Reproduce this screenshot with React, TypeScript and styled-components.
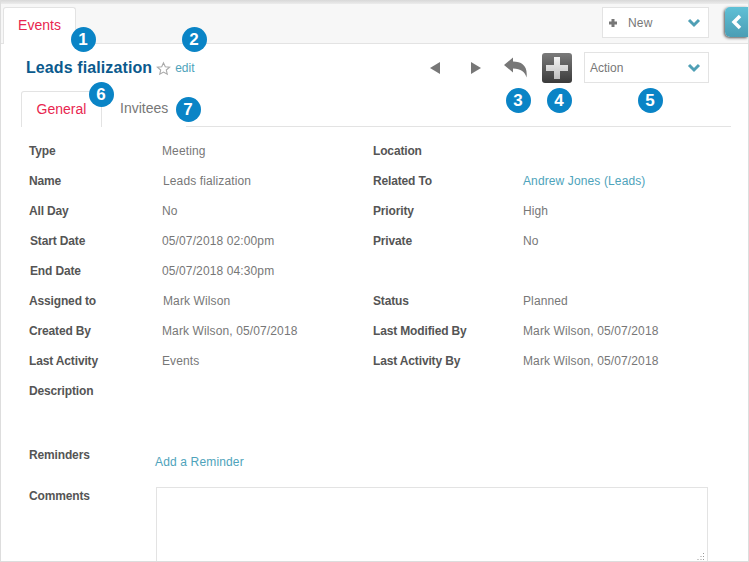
import React from "react";
import styled, { createGlobalStyle } from "styled-components";

const GlobalStyle = createGlobalStyle`
  html, body {
    margin: 0;
    padding: 0;
    background: #fff;
    overflow: hidden;
  }
  * {
    box-sizing: border-box;
  }
`;

const Page = styled.div`
  position: relative;
  width: 749px;
  height: 562px;
  overflow: hidden;
  font-family: "Liberation Sans", Arial, sans-serif;
  font-size: 12px;
  color: #666;
  background: #fff;
  border-left: 1px solid #ddd;
  border-right: 1px solid #ddd;
  border-bottom: 1px solid #ddd;
`;

const Shade = styled.div`
  height: 4px;
  background: linear-gradient(#d8d8d8, #ececec);
`;

const TopBar = styled.div`
  height: 40px;
  background: #f7f7f7;
  border-bottom: 1px solid #e3e3e3;
  display: flex;
  padding: 3px 0 0 2px;
`;

const ModuleTab = styled.div`
  width: 73px;
  height: 37px;
  background: #fff;
  border: 1px solid #e3e3e3;
  border-bottom: 0;
  border-radius: 3px 3px 0 0;
  color: #e8264f;
  font-size: 14px;
  text-align: center;
  line-height: 35px;
`;

const NewButton = styled.div`
  margin-left: auto;
  margin-right: 16px;
  width: 107px;
  height: 31px;
  background: #fff;
  border: 1px solid #e3e3e3;
  display: flex;
  align-items: center;
  padding: 0 7px 0 5px;
  font-size: 12px;
  letter-spacing: 0.15px;
  color: #777;
`;

const NewLabel = styled.span`
  margin-left: 10px;
  flex: 1;
`;

const CollapseTab = styled.div`
  width: 23px;
  height: 30px;
  background: linear-gradient(#5fc0d6, #4a9db4);
  border-radius: 5px 0 0 5px;
  box-shadow: -1px 1px 3px #555;
  display: flex;
  align-items: center;
  justify-content: center;
`;

const Body = styled.div`
  padding: 0 17px 0 20px;
`;

const HeaderRow = styled.div`
  height: 47px;
  display: flex;
  align-items: flex-start;
`;

const TitleGroup = styled.div`
  display: flex;
  align-items: center;
  height: 20px;
  margin: 14px 0 0 5px;
`;

const Title = styled.h1`
  margin: 0;
  font-size: 16px;
  font-weight: bold;
  letter-spacing: 0.1px;
  color: #0b5a8d;
`;

const Star = styled.svg`
  margin-left: 4px;
`;

const EditLink = styled.a`
  color: #4ea3bb;
  font-size: 12px;
  margin-left: 4px;
`;

const Actions = styled.div`
  margin-left: auto;
  margin-top: 8px;
  margin-right: 22px;
  display: flex;
  align-items: center;
  height: 31px;
`;

const NavIcon = styled.svg<{ $gap: number }>`
  margin-right: ${(p) => p.$gap}px;
  display: block;
`;

const ActionSelect = styled.div`
  width: 125px;
  height: 31px;
  margin-left: 12px;
  border: 1px solid #e3e3e3;
  display: flex;
  align-items: center;
  justify-content: space-between;
  padding: 0 7px 0 5px;
  font-size: 12px;
  color: #777;
`;

const TabStrip = styled.div`
  height: 36px;
  display: flex;
  border-bottom: 1px solid #e3e3e3;
`;

const InnerTab = styled.div<{ $active?: boolean }>`
  height: 36px;
  padding: 0 ${(p) => (p.$active ? "14px" : "18px")};
  width: ${(p) => (p.$active ? "81px" : "auto")};
  font-size: 14px;
  line-height: 35px;
  text-align: center;
  color: ${(p) => (p.$active ? "#e8264f" : "#777")};
  background: #fff;
  border: ${(p) => (p.$active ? "1px solid #e3e3e3" : "0")};
  border-bottom: 0;
  border-radius: 3px 3px 0 0;
`;

const Details = styled.div`
  padding: 9px 0 0 8px;
  display: grid;
  grid-template-columns: 133px 211px 150px 1fr;
  grid-auto-rows: 30px;
  align-items: center;
`;

const Label = styled.div<{ $nudge?: number }>`
  font-weight: bold;
  letter-spacing: -0.15px;
  color: #555;
  margin-left: ${(p) => p.$nudge ?? 0}px;
`;

const Value = styled.div<{ $nudge?: number }>`
  color: #777;
  letter-spacing: 0.12px;
  margin-left: ${(p) => p.$nudge ?? 0}px;
`;

const ValueLink = styled(Value)`
  color: #4ea3bb;
`;

const Reminders = styled.div`
  margin: 42px 0 0 8px;
  display: flex;
  height: 33px;
`;

const ReminderLink = styled.a`
  margin: 7px 0 0 81px;
  color: #4ea3bb;
  letter-spacing: 0.15px;
`;

const StackedLabel = styled(Label)`
  width: 45px;
  line-height: 14px;
`;

const Comments = styled.div`
  margin: 6px 0 0 8px;
  display: flex;
`;

const CommentsLabel = styled(Label)`
  width: 127px;
  padding-top: 2px;
`;

const CommentBox = styled.div`
  position: relative;
  width: 552px;
  height: 100px;
  border: 1px solid #e3e3e3;
`;

const Grip = styled.svg`
  position: absolute;
  right: 2px;
  top: 65px;
`;

const Badge = styled.div<{ $x: number; $y: number }>`
  position: absolute;
  left: ${(p) => p.$x - 13.5}px;
  top: ${(p) => p.$y - 12.5}px;
  width: 25px;
  height: 25px;
  border-radius: 50%;
  background: #0a84c6;
  color: #fff;
  font-size: 17px;
  font-weight: bold;
  line-height: 25px;
  text-align: center;
`;

const Chevron = () => (
  <svg width="14" height="10" viewBox="0 0 14 10">
    <path d="M2 2 L7 7 L12 2" fill="none" stroke="#4f9fb5" strokeWidth="3" />
  </svg>
);

const rows: [React.ReactNode, React.ReactNode, string, React.ReactNode][] = [
  [<Label>Type</Label>, <Value>Meeting</Value>, "Location", <Value />],
  [<Label>Name</Label>, <Value $nudge={1}>Leads fialization</Value>, "Related To", <ValueLink>Andrew Jones (Leads)</ValueLink>],
  [<Label>All Day</Label>, <Value>No</Value>, "Priority", <Value>High</Value>],
  [<Label $nudge={1}>Start Date</Label>, <Value>05/07/2018 02:00pm</Value>, "Private", <Value>No</Value>],
  [<Label $nudge={1}>End Date</Label>, <Value>05/07/2018 04:30pm</Value>, "", <Value />],
  [<Label>Assigned to</Label>, <Value $nudge={1}>Mark Wilson</Value>, "Status", <Value>Planned</Value>],
  [<Label>Created By</Label>, <Value>Mark Wilson, 05/07/2018</Value>, "Last Modified By", <Value>Mark Wilson, 05/07/2018</Value>],
  [<Label>Last Activity</Label>, <Value>Events</Value>, "Last Activity By", <Value>Mark Wilson, 05/07/2018</Value>],
  [<Label>Description</Label>, <Value />, "", <Value />],
];

const badges = [
  { n: 1, x: 83, y: 39 },
  { n: 2, x: 194, y: 39 },
  { n: 3, x: 518, y: 100 },
  { n: 4, x: 559, y: 100 },
  { n: 5, x: 650, y: 100 },
  { n: 6, x: 101, y: 94 },
  { n: 7, x: 188, y: 109 },
];

export default function App() {
  return (
    <Page>
      <GlobalStyle />
      <Shade />
      <TopBar>
        <ModuleTab>Events</ModuleTab>
        <NewButton>
          <svg width="10" height="10" viewBox="0 0 10 10">
            <path d="M5 1 V9 M1 5 H9" stroke="#777" strokeWidth="3" />
          </svg>
          <NewLabel>New</NewLabel>
          <Chevron />
        </NewButton>
        <CollapseTab>
          <svg width="12" height="16" viewBox="0 0 12 16">
            <path d="M9 2 L3 8 L9 14" fill="none" stroke="#fff" strokeWidth="3.5" />
          </svg>
        </CollapseTab>
      </TopBar>
      <Body>
        <HeaderRow>
          <TitleGroup>
            <Title>Leads fialization</Title>
            <Star width="15" height="15" viewBox="0 0 16 15">
              <path
                d="M8 1.5 L9.9 5.6 L14.5 6.1 L11 9.1 L12 13.6 L8 11.3 L4 13.6 L5 9.1 L1.5 6.1 L6.1 5.6 Z"
                fill="none"
                stroke="#aaa"
                strokeWidth="1.2"
              />
            </Star>
            <EditLink>edit</EditLink>
          </TitleGroup>
          <Actions>
            <NavIcon $gap={31} width="10" height="12" viewBox="0 0 10 12">
              <path d="M10 0 V12 L0 6 Z" fill="#777" />
            </NavIcon>
            <NavIcon $gap={23} width="10" height="12" viewBox="0 0 10 12">
              <path d="M0 0 V12 L10 6 Z" fill="#777" />
            </NavIcon>
            <NavIcon $gap={14} width="24" height="21" viewBox="0 0 24 21">
              <path
                d="M0 8 L9 0.5 V4.5 C18 4.5 24 9 22.5 20.5 C21 15 17 11.5 9 11.5 V15.5 Z"
                fill="#777"
              />
            </NavIcon>
            <svg width="30" height="30" viewBox="0 0 30 30">
              <defs>
                <linearGradient id="tile" x1="0" y1="0" x2="0" y2="1">
                  <stop offset="0" stopColor="#7a7a7a" />
                  <stop offset="1" stopColor="#3a3a3a" />
                </linearGradient>
                <linearGradient id="cross" x1="0" y1="0" x2="0" y2="1">
                  <stop offset="0" stopColor="#f4f4f4" />
                  <stop offset="1" stopColor="#bdbdbd" />
                </linearGradient>
              </defs>
              <rect width="30" height="30" rx="3" fill="url(#tile)" />
              <path d="M12 4 H18 V12 H26 V18 H18 V26 H12 V18 H4 V12 H12 Z" fill="url(#cross)" />
            </svg>
            <ActionSelect>
              Action
              <Chevron />
            </ActionSelect>
          </Actions>
        </HeaderRow>
        <TabStrip>
          <InnerTab $active>General</InnerTab>
          <InnerTab>Invitees</InnerTab>
        </TabStrip>
        <Details>
          {rows.map(([a, b, c, d], i) => (
            <React.Fragment key={i}>
              {a}
              {b}
              <Label>{c}</Label>
              {d}
            </React.Fragment>
          ))}
        </Details>
        <Reminders>
          <StackedLabel>Reminders</StackedLabel>
          <ReminderLink>Add a Reminder</ReminderLink>
        </Reminders>
        <Comments>
          <CommentsLabel>Comments</CommentsLabel>
          <CommentBox>
            <Grip width="9" height="9" viewBox="0 0 9 9">
              <path d="M7.5 0 V1 M5 3 V4 M7.5 3 V4 M2 6 V7 M5 6 V7 M7.5 6 V7" stroke="#999" strokeWidth="1" />
            </Grip>
          </CommentBox>
        </Comments>
      </Body>
      {badges.map((b) => (
        <Badge key={b.n} $x={b.x} $y={b.y}>
          {b.n}
        </Badge>
      ))}
    </Page>
  );
}
